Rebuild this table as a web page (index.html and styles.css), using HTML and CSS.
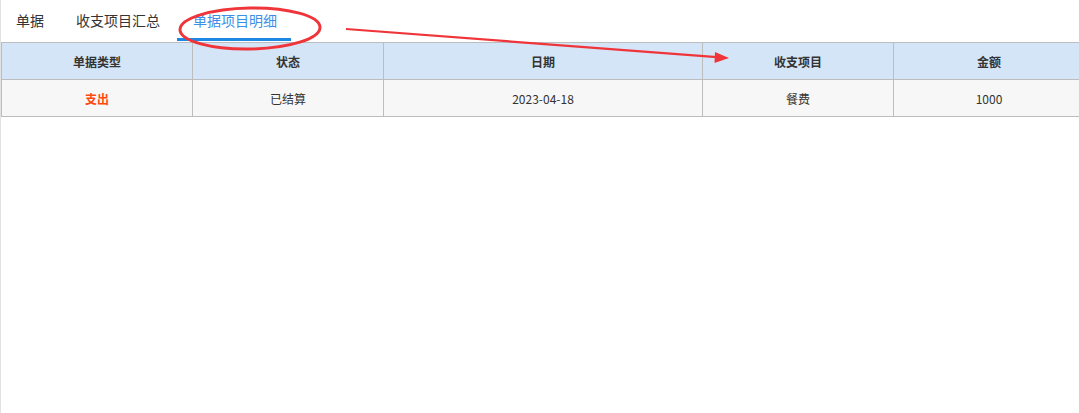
FILE: index.html
```html
<!DOCTYPE html>
<html lang="zh-CN">
<head>
  <meta charset="UTF-8">
  <title>单据项目明细</title>
  <link rel="stylesheet" href="styles.css">
</head>
<body>
  <div class="page">
    <div class="tabs">
      <div class="tab">单据</div>
      <div class="tab">收支项目汇总</div>
      <div class="tab active">单据项目明细</div>
    </div>

    <table class="grid">
      <colgroup>
        <col style="width:191px">
        <col style="width:191px">
        <col style="width:319px">
        <col style="width:191px">
        <col style="width:191px">
      </colgroup>
      <thead>
        <tr>
          <th>单据类型</th>
          <th>状态</th>
          <th>日期</th>
          <th>收支项目</th>
          <th>金额</th>
        </tr>
      </thead>
      <tbody>
        <tr>
          <td class="out">支出</td>
          <td>已结算</td>
          <td>2023-04-18</td>
          <td>餐费</td>
          <td>1000</td>
        </tr>
      </tbody>
    </table>

    <!-- annotation drawn over the page -->
    <svg class="marks" width="1079" height="413" viewBox="0 0 1079 413">
      <ellipse cx="250" cy="28.5" rx="70" ry="20.5" transform="rotate(-1 250 28.5)" fill="none" stroke="#f0353a" stroke-width="3"/>
      <line x1="346" y1="29" x2="717" y2="57.2" stroke="#f0353a" stroke-width="2.2"/>
      <polygon points="729,58 715,52 714.5,63" fill="#f0353a"/>
    </svg>
  </div>
</body>
</html>
```

FILE: styles.css
```css
* {
  margin: 0;
  padding: 0;
  box-sizing: border-box;
}
html, body {
  height: 100%;
  overflow: hidden;
}
body {
  font-family: "Microsoft YaHei", "Noto Sans CJK SC", sans-serif;
  background-color: #fff;
  color: #333;
}
.page {
  position: relative;
  height: 100%;
  border-left: 1px solid #e2e2e2;
}
.tabs {
  display: flex;
  height: 42px;
  padding-left: 3px;
}
.tab {
  padding: 0 12px;
  margin-right: 8px;
  font-size: 14px;
  line-height: 40px;
  color: #333;
  border-bottom: 3px solid transparent;
  height: 41px;
}
.tab.active {
  color: #3b8fe8;
  border-bottom-color: #1e88e5;
  margin-left: -3px;
  padding: 0 14px 0 16px;
}
.grid {
  table-layout: fixed;
  border-collapse: collapse;
  width: 1083px;
  font-size: 12px;
}
.grid th,
.grid td {
  height: 37px;
  text-align: center;
  border: 1px solid #bdbdbd;
  padding: 0 4px;
}
.grid th {
  background-color: #d4e5f7;
  font-weight: 700;
  color: #333;
}
.grid td {
  background-color: #f7f7f7;
}
.grid td.out {
  color: #ff4a0f;
  font-weight: 700;
}
.marks {
  position: absolute;
  top: 0;
  left: -1px;
  pointer-events: none;
}
```
